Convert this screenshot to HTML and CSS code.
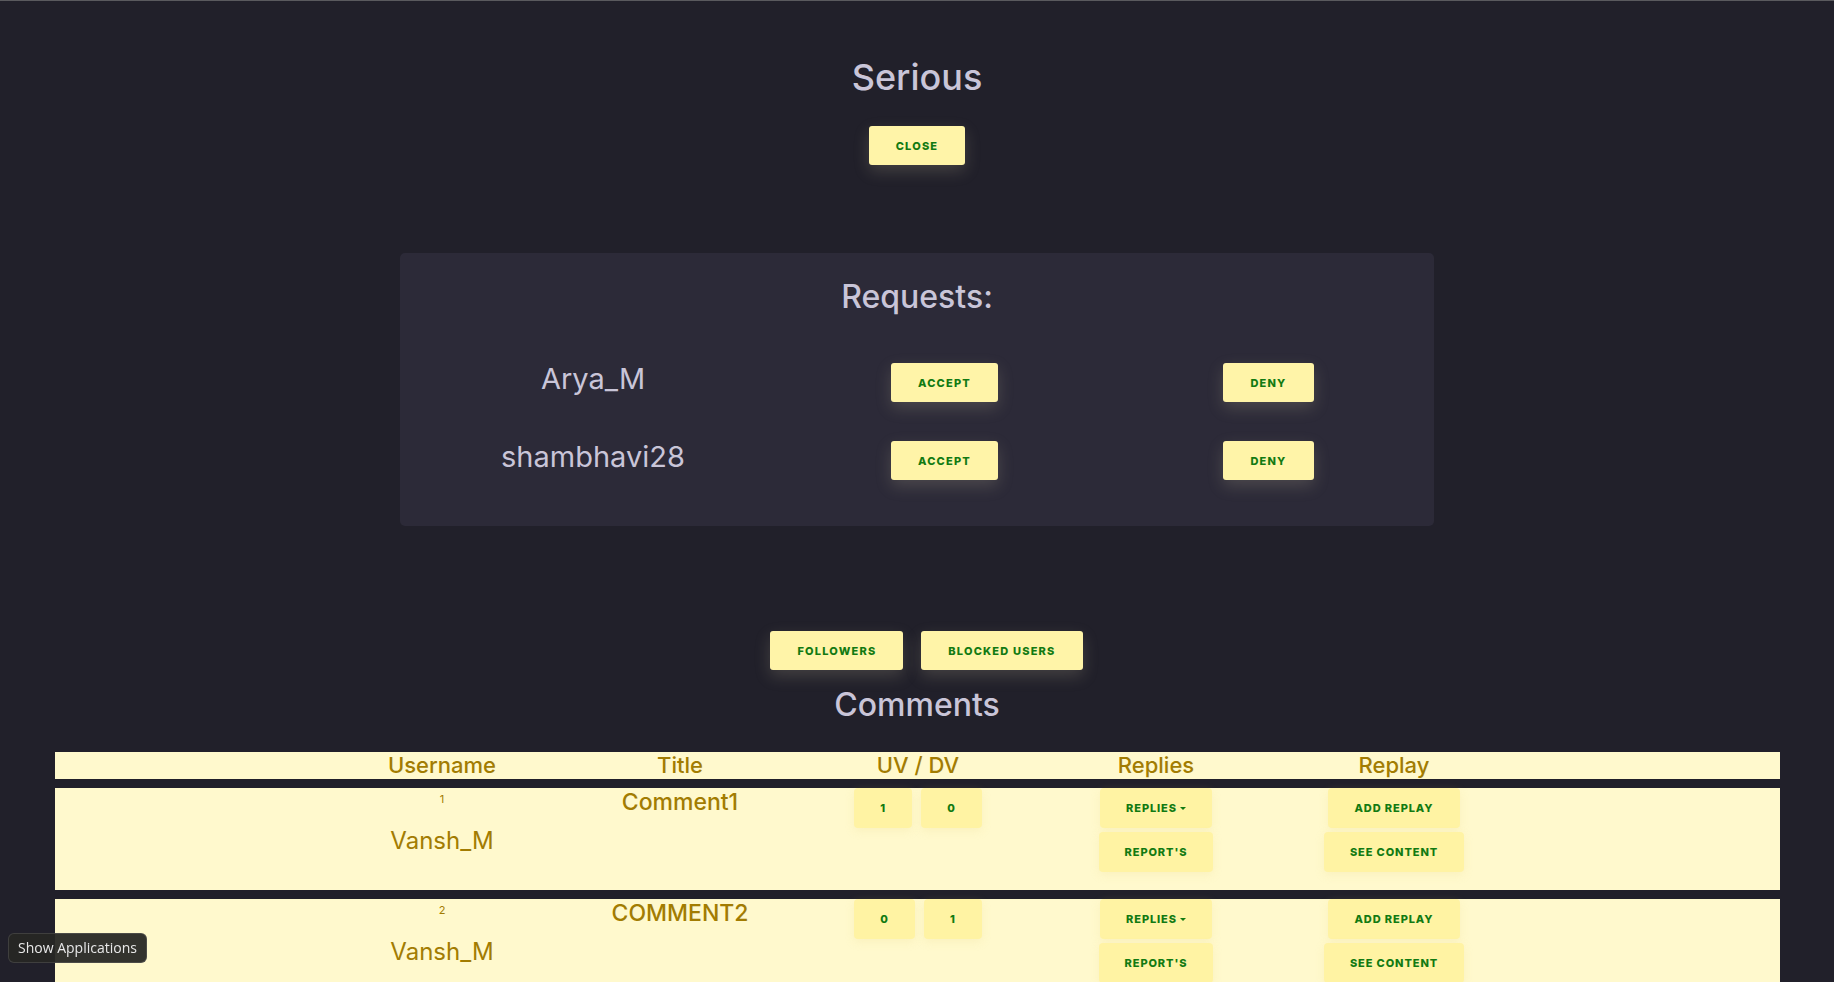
FILE: index.html
```html
<!DOCTYPE html>
<html lang="en">
<head>
<meta charset="utf-8">
<title>Serious</title>
<link rel="stylesheet" href="styles.css">
</head>
<body>
<div class="topline"></div>
<header class="top">
  <h1 class="page-title">Serious</h1>
  <button class="btn">Close</button>
</header>

<section class="requests">
  <h2 class="section-title">Requests:</h2>
  <div class="req-grid">
    <div class="req-name">Arya_M</div>
    <div class="req-cell"><button class="btn">Accept</button></div>
    <div class="req-cell"><button class="btn">Deny</button></div>
    <div class="req-name">shambhavi28</div>
    <div class="req-cell"><button class="btn">Accept</button></div>
    <div class="req-cell"><button class="btn">Deny</button></div>
  </div>
</section>

<div class="actions">
  <button class="btn">Followers</button>
  <button class="btn">Blocked Users</button>
</div>

<h2 class="section-title comments-title">Comments</h2>

<div class="ctable">
  <div class="crow chead">
    <div></div>
    <div class="th">Username</div>
    <div class="th">Title</div>
    <div class="th">UV / DV</div>
    <div class="th">Replies</div>
    <div class="th">Replay</div>
    <div></div>
  </div>

  <div class="crow cbody">
    <div></div>
    <div class="cell user"><span class="num">1</span><span class="uname">Vansh_M</span></div>
    <div class="cell title">Comment1</div>
    <div class="cell votes"><button class="tbtn">1</button><button class="tbtn">0</button></div>
    <div class="cell stack"><button class="tbtn">Replies <span class="caret"></span></button><button class="tbtn">Report's</button></div>
    <div class="cell stack"><button class="tbtn">Add Replay</button><button class="tbtn">See Content</button></div>
    <div></div>
  </div>

  <div class="crow cbody">
    <div></div>
    <div class="cell user"><span class="num">2</span><span class="uname">Vansh_M</span></div>
    <div class="cell title">COMMENT2</div>
    <div class="cell votes"><button class="tbtn">0</button><button class="tbtn">1</button></div>
    <div class="cell stack"><button class="tbtn">Replies <span class="caret"></span></button><button class="tbtn">Report's</button></div>
    <div class="cell stack"><button class="tbtn">Add Replay</button><button class="tbtn">See Content</button></div>
    <div></div>
  </div>
</div>

<div class="tooltip">Show Applications</div>
</body>
</html>
```
FILE: styles.css
```css
html, body {
  margin: 0;
  padding: 0;
}
body {
  background: #21202a;
  font-family: Inter, "Open Sans", sans-serif;
  color: #c9c5d8;
  min-height: 982px;
}
.topline {
  height: 1px;
  background: #5a5a5e;
}
.top {
  display: flex;
  flex-direction: column;
  align-items: center;
}
.page-title {
  margin: 54px 0 0;
  font-size: 36px;
  font-weight: 500;
  line-height: 44px;
  color: #c9c5d8;
}
.btn {
  font-family: Inter, sans-serif;
  font-size: 11px;
  font-weight: 800;
  letter-spacing: 1.2px;
  text-transform: uppercase;
  color: #127a12;
  background: #fff4a8;
  border: none;
  border-radius: 3px;
  height: 39px;
  padding: 0 27px;
  box-shadow: 0 6px 16px rgba(190, 180, 150, 0.22);
  cursor: pointer;
}
.top .btn {
  margin-top: 27px;
}
.requests {
  width: 1034px;
  margin: 88px auto 0;
  background: #2c2a38;
  border-radius: 5px;
  padding: 24px 0 46px;
  box-sizing: border-box;
}
.section-title {
  margin: 0;
  text-align: center;
  font-size: 32px;
  font-weight: 500;
  line-height: 40px;
  color: #c9c5d8;
}
.req-grid {
  display: grid;
  grid-template-columns: 386px 317px 1fr;
  row-gap: 39px;
  margin-top: 46px;
  align-items: center;
}
.req-name {
  text-align: center;
  font-size: 29px;
  font-weight: 400;
  line-height: 36px;
  margin-top: -7px;
}
.req-cell {
  display: flex;
  justify-content: center;
}
.actions {
  display: flex;
  justify-content: center;
  gap: 18px;
  margin-top: 105px;
  padding-left: 19px;
}
.comments-title {
  margin-top: 15px;
}
.ctable {
  margin: 27px 54px 0 55px;
  display: flex;
  flex-direction: column;
  gap: 9px;
}
.crow {
  display: grid;
  grid-template-columns: 268px repeat(5, 238px) 1fr;
  background: #fff9cd;
  color: #a27c02;
}
.th {
  text-align: center;
  font-size: 22px;
  line-height: 27px;
  font-weight: 500;
}
.cbody {
  padding-bottom: 18px;
}
.cell {
  display: flex;
  justify-content: center;
}
.user {
  flex-direction: column;
  justify-content: flex-start;
  align-items: center;
}
.num {
  font-size: 11px;
  line-height: 14px;
  margin-top: 4px;
}
.uname {
  font-size: 24px;
  line-height: 30px;
  margin-top: 20px;
}
.title {
  font-size: 23px;
  line-height: 28px;
  font-weight: 500;
}
.votes {
  gap: 9px;
}
.stack {
  flex-direction: column;
  align-items: center;
  gap: 4px;
}
.tbtn {
  font-family: Inter, sans-serif;
  font-size: 11px;
  font-weight: 800;
  letter-spacing: 0.9px;
  text-transform: uppercase;
  color: #127a12;
  background: #fff3a3;
  border: none;
  border-radius: 4px;
  height: 40px;
  padding: 0 26px;
  box-shadow: 0 3px 10px rgba(230, 210, 120, 0.18);
  cursor: pointer;
  display: inline-flex;
  align-items: center;
  justify-content: center;
}
.caret {
  display: inline-block;
  width: 0;
  height: 0;
  border-left: 3px solid transparent;
  border-right: 3px solid transparent;
  border-top: 3px solid #127a12;
  margin-left: 3px;
}
.tooltip {
  position: fixed;
  left: 8px;
  top: 933px;
  width: 139px;
  height: 30px;
  box-sizing: border-box;
  background: rgba(38, 38, 36, 0.94);
  border: 1px solid rgba(255, 255, 255, 0.12);
  border-radius: 6px;
  color: #e8e8e8;
  font-family: "Open Sans", sans-serif;
  font-size: 14px;
  line-height: 28px;
  text-align: center;
}
```
